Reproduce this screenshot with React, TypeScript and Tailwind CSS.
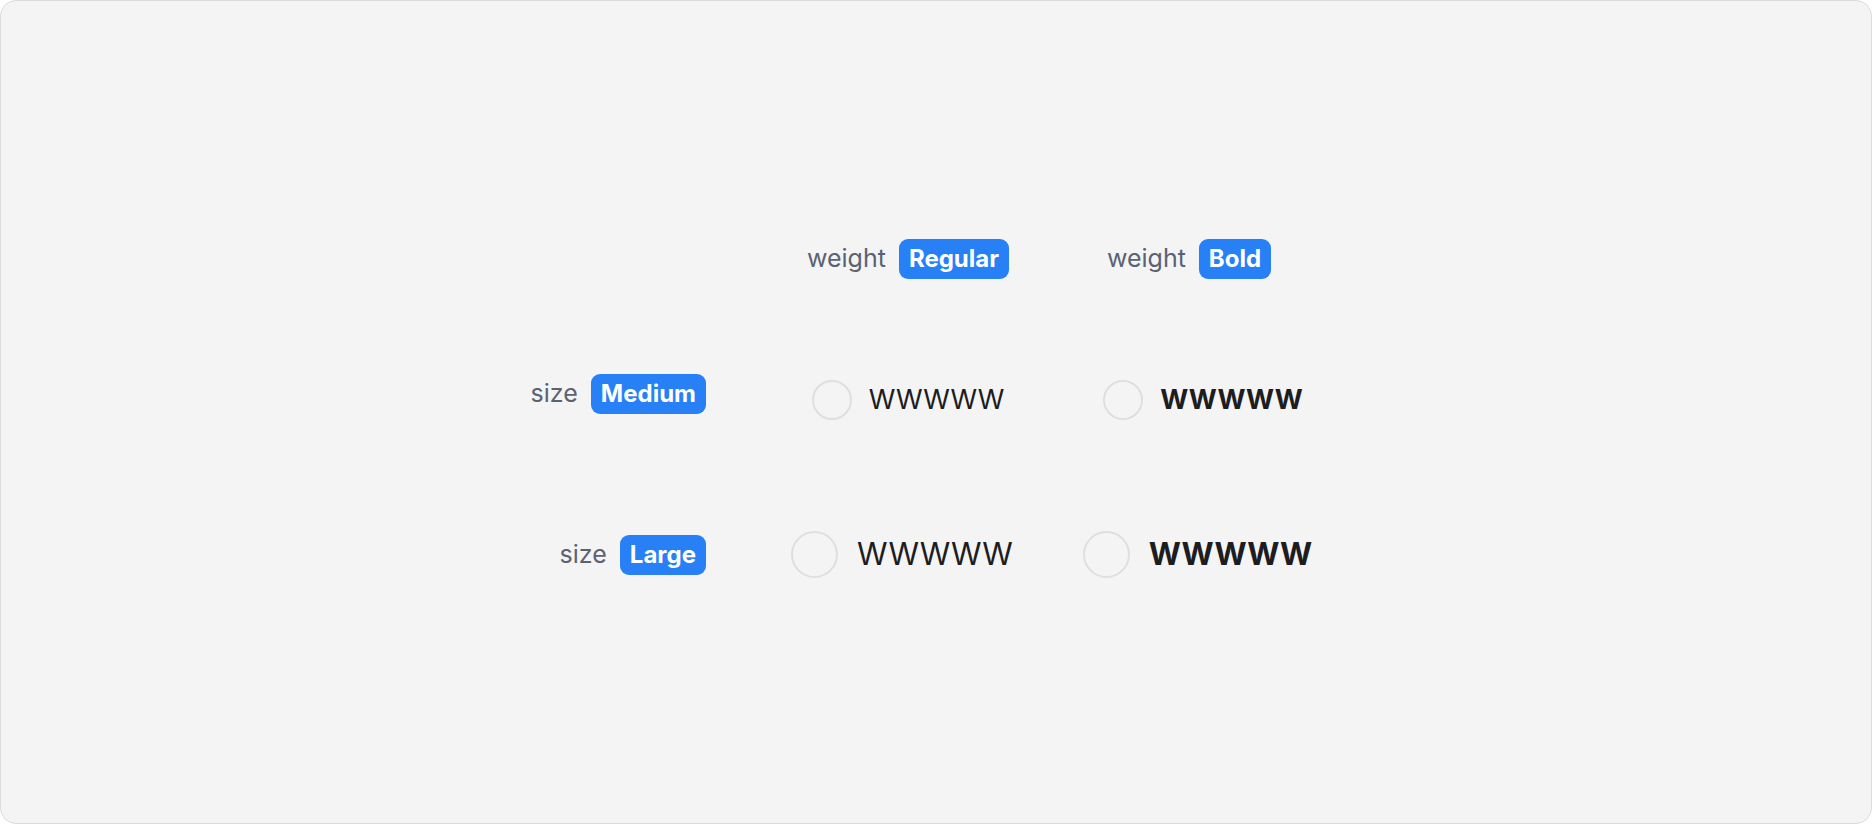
import React from "react";

const font = { fontFamily: "Inter, 'Noto Sans', sans-serif" };

function Badge({ children }: { children: React.ReactNode }) {
  return (
    <span className="inline-flex h-[40px] items-center rounded-[9px] bg-[#2780f6] px-[10px] text-[24px] font-bold text-white">
      {children}
    </span>
  );
}

function Label({ name, value }: { name: string; value: string }) {
  return (
    <div className="flex items-center gap-[13px]">
      <span className="text-[25px] text-[#5b6272]">{name}</span>
      <Badge>{value}</Badge>
    </div>
  );
}

function Sample({ large, bold }: { large?: boolean; bold?: boolean }) {
  return (
    <div className={large ? "flex items-center gap-[19px]" : "flex items-center gap-[17px]"}>
      <span
        className={
          large
            ? "h-[47px] w-[47px] rounded-full border-2 border-[#dfdfe3]"
            : "h-[40px] w-[40px] rounded-full border-2 border-[#dfdfe3]"
        }
      />
      <span
        className={
          (large ? "text-[31px] " : "text-[27px] ") +
          (bold ? "font-bold text-[#1d1d1f]" : "font-normal text-[#1d1d1f]")
        }
      >
        WWWWW
      </span>
    </div>
  );
}

export default function App() {
  return (
    <div className="bg-white" style={font}>
      <div className="flex h-[824px] w-full flex-col items-center rounded-[16px] border border-[#dcdcdc] bg-[#f4f4f5] pt-[238px]">
        {/* header */}
        <div className="grid h-[40px] grid-cols-[228px_290px_290px] items-center">
          <div />
          <div className="flex justify-center pl-[6px]">
            <Label name="weight" value="Regular" />
          </div>
          <div className="flex justify-center pr-[12px]">
            <Label name="weight" value="Bold" />
          </div>
        </div>

        {/* medium */}
        <div className="mt-[95px] grid h-[46px] grid-cols-[228px_290px_290px] items-end">
          <div className="flex justify-end self-start pr-[54px]">
            <Label name="size" value="Medium" />
          </div>
          <div className="flex justify-center pl-[6px]">
            <Sample />
          </div>
          <div className="flex justify-center pl-[16px]">
            <Sample bold />
          </div>
        </div>

        {/* large */}
        <div className="mt-[111px] grid h-[47px] grid-cols-[228px_290px_290px] items-center">
          <div className="flex justify-end pr-[54px]">
            <Label name="size" value="Large" />
          </div>
          <div className="flex justify-center pr-[6px]">
            <Sample large />
          </div>
          <div className="flex justify-center pl-[5px]">
            <Sample large bold />
          </div>
        </div>
      </div>
    </div>
  );
}
